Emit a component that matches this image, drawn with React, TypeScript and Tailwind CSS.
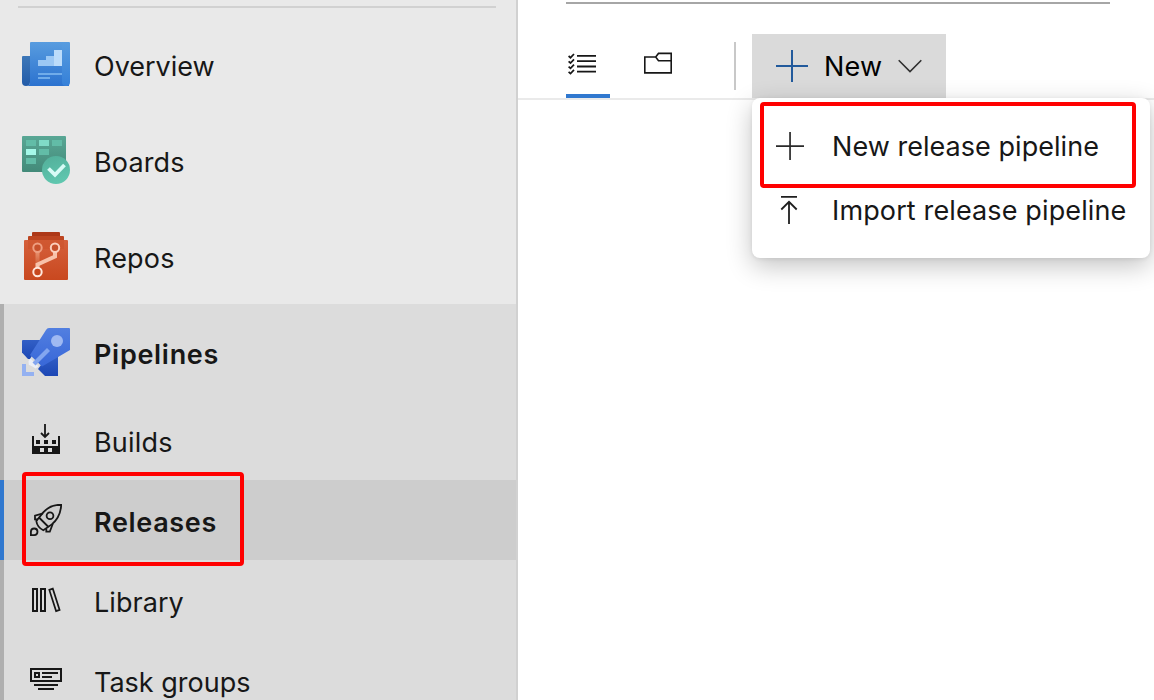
import type { ReactNode } from 'react';

function OverviewIcon() {
  return (
    <svg width="48" height="48" viewBox="0 0 48 48">
      <defs>
        <linearGradient id="ov1" x1="0" y1="0" x2="0" y2="1">
          <stop offset="0" stopColor="#589cdf" />
          <stop offset="1" stopColor="#2b72cf" />
        </linearGradient>
        <linearGradient id="ov2" x1="0" y1="0" x2="0" y2="1">
          <stop offset="0" stopColor="#3d77b8" />
          <stop offset="1" stopColor="#225ba8" />
        </linearGradient>
        <linearGradient id="ov3" x1="0" y1="0" x2="0" y2="1">
          <stop offset="0" stopColor="#589cdf" />
          <stop offset="1" stopColor="#3580d8" />
        </linearGradient>
      </defs>
      <path d="M9 2h38v44H4a4 4 0 0 0 4-4V3a1 1 0 0 1 1-1z" fill="url(#ov1)" />
      <path d="M1 16h7v26a4 4 0 0 1-8 0V17a1 1 0 0 1 1-1z" fill="url(#ov2)" />
      <path d="M40 2h7a1 1 0 0 1 1 1v39a4 4 0 0 1-8 0z" fill="url(#ov3)" />
      <path d="M16 20h8v-4h8v10H16z" fill="#9cc8f4" />
      <path d="M32 10h8v16h-8z" fill="#bcdcfa" />
      <path d="M16 33h24v2H16zM16 37h12v2H16z" fill="#70acea" />
    </svg>
  );
}

function BoardsIcon() {
  return (
    <svg width="48" height="48" viewBox="0 0 48 48">
      <defs>
        <linearGradient id="bd1" x1="0" y1="0" x2="0" y2="1">
          <stop offset="0" stopColor="#59a795" />
          <stop offset="1" stopColor="#438a79" />
        </linearGradient>
        <linearGradient id="bd2" x1="0.3" y1="0" x2="0.6" y2="1">
          <stop offset="0" stopColor="#53b09b" />
          <stop offset="1" stopColor="#60c8b0" />
        </linearGradient>
      </defs>
      <rect width="44" height="36" rx="1" fill="url(#bd1)" />
      <path d="M4 4h10v6H4zM30 4h10v6H30zM17 13h10v6H17zM4 22h10v6H4z" fill="#62bca7" />
      <path d="M17 4h10v6H17z" fill="#80dbc7" />
      <path d="M4 13h10v6H4z" fill="#a5f8e8" />
      <circle cx="34" cy="34" r="14" fill="url(#bd2)" />
      <path d="M26.5 32.5l6.5 6.3L42.5 29" fill="none" stroke="#d7fbf6" strokeWidth="3.8" />
    </svg>
  );
}

function ReposIcon() {
  return (
    <svg width="48" height="48" viewBox="0 0 48 48">
      <defs>
        <linearGradient id="rp1" x1="0" y1="0" x2="0" y2="1">
          <stop offset="0" stopColor="#d5603b" />
          <stop offset="1" stopColor="#c9481f" />
        </linearGradient>
        <linearGradient id="rp2" x1="0" y1="0" x2="0" y2="1">
          <stop offset="0" stopColor="#e99572" />
          <stop offset="1" stopColor="#cd552e" />
        </linearGradient>
      </defs>
      <rect x="10" y="0" width="28" height="8" rx="1" fill="#ad3818" />
      <rect x="6" y="4" width="36" height="8" rx="1" fill="#bd4521" />
      <rect x="2" y="8" width="44" height="40" rx="1" fill="url(#rp1)" />
      <path d="M6 8h36v9H6z" fill="#c95029" opacity=".45" />
      <path d="M13.5 19.500h4V34h-4z" fill="url(#rp2)" />
      <path d="M15.500 36v-3.500l17.500-8V19" fill="none" stroke="#f8c2aa" strokeWidth="4" />
      <circle cx="15.500" cy="15.700" r="4.200" fill="#c7512c" stroke="#ee9e80" strokeWidth="2" />
      <circle cx="33" cy="15.700" r="4.200" fill="#c7512c" stroke="#fbd0bd" strokeWidth="2" />
      <circle cx="15.500" cy="40" r="4.200" fill="#c7471e" stroke="#ffe7dc" strokeWidth="2" />
    </svg>
  );
}

function PipelinesIcon() {
  return (
    <svg width="48" height="48" viewBox="0 0 48 48">
      <defs>
        <linearGradient id="pl1" x1="0" y1="0" x2="0" y2="1">
          <stop offset="0" stopColor="#325fc6" />
          <stop offset="1" stopColor="#1c47b5" />
        </linearGradient>
        <linearGradient id="pl2" x1="0" y1="0" x2="0" y2="1">
          <stop offset="0" stopColor="#527fe0" />
          <stop offset="1" stopColor="#3867d8" />
        </linearGradient>
      </defs>
      <path d="M1 12h19L8 31H6L0 24.500V13a1 1 0 0 1 1-1z" fill="url(#pl1)" />
      <path d="M36 27v21H23l-7-7 3-4z" fill="url(#pl1)" />
      <path d="M27 0h20a1 1 0 0 1 1 1v21L20 38.500 8 27 24 2q1-2 3-2z" fill="url(#pl2)" />
      <path d="M8.500 30.500l8 8-3 2-2.700-1.800-4-2-.3-3.700z" fill="#eceff6" />
      <path d="M25 20l3 3-14.500 14.500-3-3z" fill="#83a6ef" />
      <circle cx="35" cy="13" r="6" fill="#9fb9f2" />
      <path d="M0 36h4v8h8v4H0z" fill="#94b1f1" />
    </svg>
  );
}

function BuildsIcon() {
  return (
    <svg width="32" height="32" viewBox="0 0 32 32" fill="#171717">
      <path fillRule="evenodd" d="M2 12h2v10h24V12h2v18H2zM10 24v4h4v-4zM18 24v4h4v-4z" />
      <path d="M6 16h4v4H6zM14 16h4v4h-4zM22 16h4v4h-4z" />
      <path d="M15 0v13M11 9l4 4 4-4" fill="none" stroke="#171717" strokeWidth="1.800" />
    </svg>
  );
}

function RocketIcon() {
  return (
    <svg width="32" height="32" viewBox="0 0 32 32" fill="none" stroke="#171717" strokeWidth="1.800">
      <path d="M31.200.800C24 .6 18 3 13.500 8.200L6.300 17c.5 3.600 3.500 7.500 7 9.200l8.500-5.800c6-5 9-11.500 9.400-19.600z" />
      <path d="M9 13.500l9.500 9.500" />
      <path d="M13 9.400L5 11.600v3.700l3 .2M16.300 24.500v3.200h3.500l3-8" />
      <circle cx="20" cy="11.700" r="3.400" />
      <path d="M.9 31.100v-3.500a3.300 3.300 0 1 1 3.400 3.500z" />
    </svg>
  );
}

function LibraryIcon() {
  return (
    <svg width="32" height="32" viewBox="0 0 32 32" fill="none" stroke="#171717" strokeWidth="2">
      <path d="M3 5h4v22H3zM11 5h4v22h-4z" />
      <path d="M19.300 5.900l3.500-1.200 6.800 21.200-3.500 1.200z" strokeWidth="1.700" />
    </svg>
  );
}

function TaskGroupsIcon() {
  return (
    <svg width="32" height="32" viewBox="0 0 32 32" fill="none" stroke="#171717" strokeWidth="2">
      <path d="M1 5h30v12H1zM5 9h4v4H5zM12 9h16M12 13h10M4 21h24M8 25h16" />
    </svg>
  );
}

function ChecklistIcon() {
  return (
    <svg width="28" height="24" viewBox="0 0 28 24" fill="none" stroke="#171717">
      <path d="M9 3.900h19M9 9.200h19M9 14.500h19M9 19.700h19" strokeWidth="1.800" />
      <path d="M.6 4l1.900 1.700L6 2M.6 9.300L2.500 11 6 7.300M.6 14.600l1.900 1.700L6 12.600M.6 19.900l1.900 1.700L6 17.900" strokeWidth="1.700" />
    </svg>
  );
}

function FolderIcon() {
  return (
    <svg width="28" height="24" viewBox="0 0 28 24" fill="none" stroke="#171717" strokeWidth="1.600">
      <path d="M11.500 5H.8v15.900h26.400V1.400H14.500L11.700 5l2.800 3.700h12.700" />
    </svg>
  );
}

function Plus({ size }: { size: 'lg' | 'md' }) {
  return size === 'lg' ? (
    <svg width="32" height="32" viewBox="0 0 32 32" fill="#225a9c">
      <path d="M15 0h2v15h15v2H17v15h-2V17H0v-2h15z" />
    </svg>
  ) : (
    <svg width="28" height="28" viewBox="0 0 28 28" fill="#2a2a2a">
      <path d="M13.200 0h1.700v13.200H28v1.700H14.900V28h-1.700V14.900H0v-1.700h13.200z" />
    </svg>
  );
}

function ImportIcon() {
  return (
    <svg width="28" height="28" viewBox="0 0 28 28" fill="none" stroke="#1f1f1f" strokeWidth="1.800">
      <path d="M5 .9h16M13 28V6M5.300 13.500L13 5.800l7.700 7.700" />
    </svg>
  );
}

type ItemProps = { icon: ReactNode; label: string; text: string };

function HubItem({ icon, label, text }: ItemProps) {
  return (
    <a className="flex h-24 items-center pl-[22px]">
      {icon}
      <span className={`ml-6 whitespace-nowrap pt-1.5 ${text}`}>{label}</span>
    </a>
  );
}

function SubItem({ icon, label, text, active }: ItemProps & { active?: boolean }) {
  return (
    <a
      className={`flex h-20 shrink-0 items-center border-l-4 pl-[26px] ${
        active ? 'border-[#3078cf] bg-[#cdcdcd]' : 'border-[#afafaf]'
      }`}
    >
      {icon}
      <span className={`ml-8 whitespace-nowrap pt-1.5 ${text}`}>{label}</span>
    </a>
  );
}

export default function App() {
  return (
    <div className="relative flex h-[700px] w-[1154px] overflow-hidden bg-white font-['Inter','Liberation_Sans',sans-serif] text-[27px] leading-8 text-[#171717]">
      <aside className="flex w-[518px] shrink-0 flex-col border-r-2 border-[#d1d1d1] bg-[#e9e9e9]">
        <div className="ml-[18px] mr-5 mt-1.5 mb-2 h-0.5 shrink-0 bg-[#d1d1d1]" />
        <HubItem icon={<OverviewIcon />} label="Overview" text="tracking-normal" />
        <HubItem icon={<BoardsIcon />} label="Boards" text="tracking-[0.15px]" />
        <HubItem icon={<ReposIcon />} label="Repos" text="tracking-[0.2px]" />
        <div className="flex h-[396px] shrink-0 flex-col overflow-hidden bg-[#dcdcdc]">
          <a className="flex h-24 shrink-0 items-center border-l-4 border-[#afafaf] pl-[18px]">
            <PipelinesIcon />
            <span className="ml-6 whitespace-nowrap pt-1.5 font-semibold tracking-[0.7px]">Pipelines</span>
          </a>
          <SubItem icon={<BuildsIcon />} label="Builds" text="tracking-[0.2px]" />
          <SubItem icon={<RocketIcon />} label="Releases" text="font-semibold tracking-[0.65px]" active />
          <SubItem icon={<LibraryIcon />} label="Library" text="tracking-[0.05px]" />
          <SubItem icon={<TaskGroupsIcon />} label="Task groups" text="tracking-normal" />
        </div>
      </aside>

      <main className="flex flex-1 flex-col">
        <div className="ml-12 mt-0.5 h-0.5 w-[544px] shrink-0 bg-[#a6a6a6]" />
        <div className="mt-[30px] flex h-[66px] shrink-0 border-b-2 border-[#eaeaea] pl-12">
          <div className="flex w-11 justify-start border-b-4 border-[#3078cf] pl-0.5 pt-[18px]">
            <ChecklistIcon />
          </div>
          <div className="ml-[34px] pt-[18px]">
            <FolderIcon />
          </div>
          <div className="ml-[62px] mt-2 h-12 w-0.5 bg-[#c8c8c8]" />
          <button className="ml-4 flex h-16 w-[194px] items-center bg-[#dadada] pl-6 text-black">
            <Plus size="lg" />
            <span className="ml-4 pt-0.5 tracking-[0.2px]">New</span>
            <svg className="ml-auto mr-6" width="24" height="14" viewBox="0 0 24 14" fill="none" stroke="#303030" strokeWidth="1.600">
              <path d="M.7 1.200L12 12.500 23.300 1.200" />
            </svg>
          </button>
        </div>
      </main>

      <div className="absolute left-[752px] top-[98px] flex h-40 w-[398px] flex-col rounded-lg bg-white pt-4 shadow-[0_8px_26px_rgba(0,0,0,0.24),0_1px_4px_rgba(0,0,0,0.08)]">
        <div className="flex h-16 items-center pl-6">
          <Plus size="md" />
          <span className="ml-7 whitespace-nowrap pt-0.5 tracking-[0.04px]">New release pipeline</span>
        </div>
        <div className="flex h-16 items-center pl-6">
          <ImportIcon />
          <span className="ml-7 whitespace-nowrap pt-0.5 tracking-[0.13px]">Import release pipeline</span>
        </div>
      </div>

      <div className="absolute left-[760px] top-[102px] h-[86px] w-[376px] rounded-sm border-4 border-[#ff0000]" />
      <div className="absolute left-[22px] top-[472px] h-[94px] w-[222px] rounded-sm border-4 border-[#ff0000]" />
    </div>
  );
}
